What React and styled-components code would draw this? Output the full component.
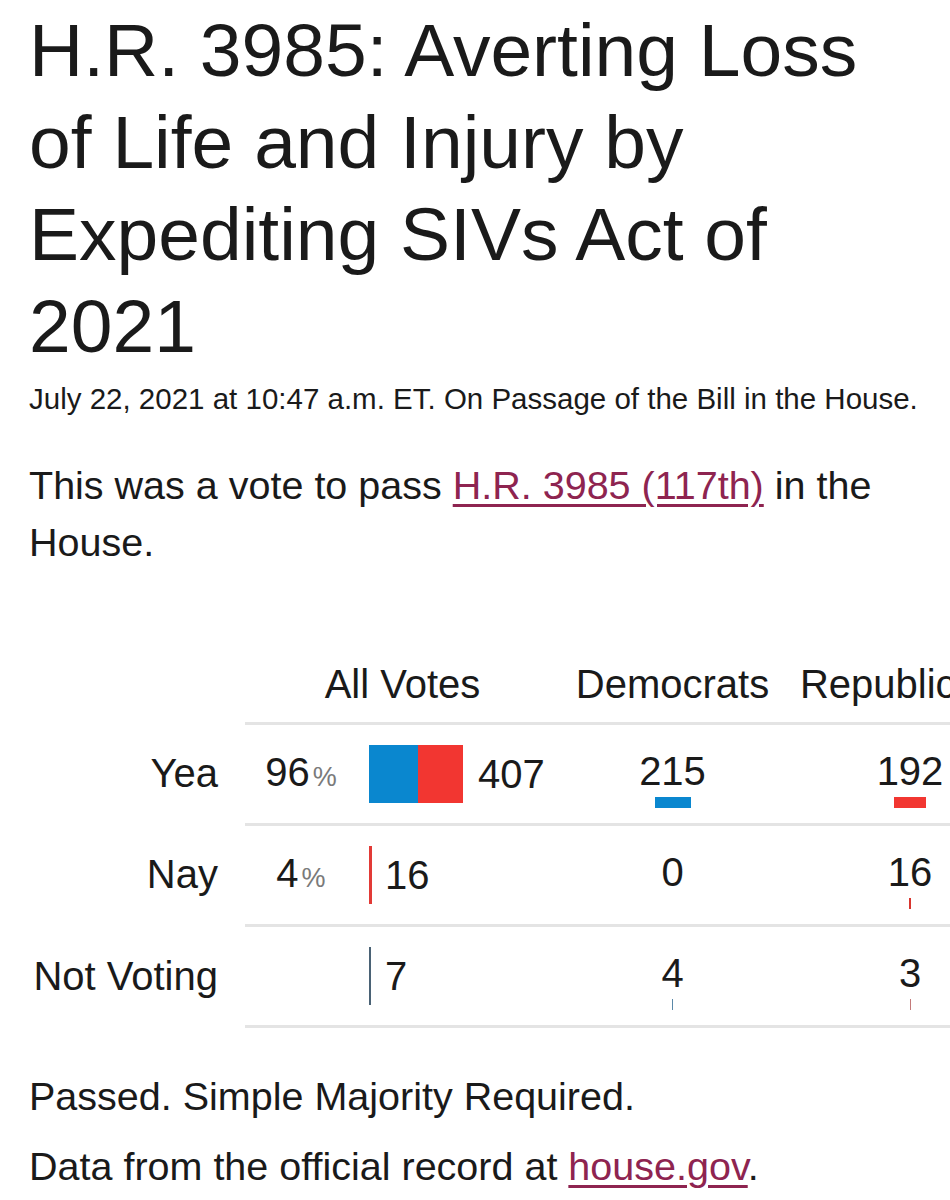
import React from "react";
import styled, { createGlobalStyle } from "styled-components";

const Global = createGlobalStyle`
  html, body { margin: 0; padding: 0; background: #fff; }
  body { overflow-x: hidden; font-family: "Liberation Sans", Arial, sans-serif; color: #1a1a1a; }
`;

const Page = styled.main`
  padding: 4px 0 40px 29px;
  width: 1100px;
`;

const Title = styled.h1`
  margin: 0;
  width: 880px;
  font-size: 75px;
  line-height: 92px;
  font-weight: 400;
`;

const Meta = styled.div`
  margin-top: 5px;
  font-size: 29.5px;
  line-height: 44px;
`;

const Para = styled.p`
  margin: ${(p) => p.$mt || 0}px 0 0;
  width: 880px;
  font-size: 39.5px;
  line-height: 57px;
`;

const Link = styled.a`
  color: #8e2450;
  text-decoration: underline;
  text-decoration-thickness: 3px;
  text-underline-offset: 5px;
`;

const Table = styled.section`
  margin-top: 89px;
  display: flex;
  flex-direction: column;
`;

const Row = styled.div`
  display: flex;
`;

const Label = styled.div`
  width: 189px;
  flex: none;
  display: flex;
  align-items: center;
  justify-content: flex-end;
  font-size: 40px;
  line-height: 48px;
  white-space: nowrap;
`;

const Cells = styled.div`
  margin-left: 27px;
  display: grid;
  grid-template-columns: 315px 225px 250px;
  height: ${(p) => (p.$head ? "auto" : "98px")};
  border-top: ${(p) => (p.$head ? "none" : "3px solid #e4e4e4")};
  border-bottom: ${(p) => (p.$last ? "3px solid #e4e4e4" : "none")};
  padding-bottom: ${(p) => (p.$head ? "14px" : "0")};
`;

const HeadCell = styled.div`
  text-align: center;
  font-size: 40px;
  line-height: 48px;
  white-space: nowrap;
`;

const AllCell = styled.div`
  display: flex;
  align-items: center;
`;

const Pct = styled.div`
  width: 112px;
  display: flex;
  justify-content: center;
  align-items: baseline;
  gap: 3px;
  font-size: 40px;
  line-height: 48px;
`;

const PctSign = styled.span`
  font-size: 27px;
  color: #7a7a7a;
`;

const Bar = styled.div`
  margin-left: 12px;
  height: 58px;
  display: flex;
  flex: none;
`;

const Seg = styled.div`
  height: 100%;
  background: ${(p) => p.$color};
`;

const Count = styled.div`
  margin-left: ${(p) => p.$gap}px;
  font-size: 40px;
  line-height: 48px;
`;

const PartyCell = styled.div`
  padding-top: 24px;
  display: flex;
  flex-direction: column;
  align-items: center;
`;

const PartyNum = styled.div`
  font-size: 40px;
  line-height: 44px;
`;

const PartyBar = styled.div`
  margin-top: 4px;
  height: 11px;
  background: ${(p) => p.$color};
`;

const BLUE = "#0a87cf";
const RED = "#f23631";

const rows = [
  { label: "Yea", pct: "96", bar: [[49, BLUE], [45, RED]], gap: 15, count: 407, dem: 215, demW: 36, rep: 192, repW: 32, dc: BLUE, rc: RED },
  { label: "Nay", pct: "4", bar: [[3, "#e23a36"]], gap: 13, count: 16, dem: 0, demW: 0, rep: 16, repW: 2, dc: BLUE, rc: "#d8362f" },
  { label: "Not Voting", pct: null, bar: [[2, "#4a6275"]], gap: 14, count: 7, dem: 4, demW: 1, rep: 3, repW: 1, dc: "#5a88a8", rc: "#c47a7a" },
];

export default function App() {
  return (
    <>
      <Global />
      <Page>
        <Title>H.R. 3985: Averting Loss of Life and Injury by Expediting SIVs Act of 2021</Title>
        <Meta>July 22, 2021 at 10:47 a.m. ET. On Passage of the Bill in the House.</Meta>
        <Para $mt={36}>
          This was a vote to pass <Link href="#">H.R. 3985 (117th)</Link> in the House.
        </Para>
        <Table>
          <Row>
            <Label />
            <Cells $head>
              <HeadCell>All Votes</HeadCell>
              <HeadCell>Democrats</HeadCell>
              <HeadCell>Republicans</HeadCell>
            </Cells>
          </Row>
          {rows.map((r, i) => (
            <Row key={r.label}>
              <Label>{r.label}</Label>
              <Cells $last={i === rows.length - 1}>
                <AllCell>
                  <Pct>
                    {r.pct && (
                      <>
                        {r.pct}
                        <PctSign>%</PctSign>
                      </>
                    )}
                  </Pct>
                  <Bar>
                    {r.bar.map(([w, c], k) => (
                      <Seg key={k} $color={c} style={{ width: w }} />
                    ))}
                  </Bar>
                  <Count $gap={r.gap}>{r.count}</Count>
                </AllCell>
                <PartyCell>
                  <PartyNum>{r.dem}</PartyNum>
                  <PartyBar $color={r.dc} style={{ width: r.demW }} />
                </PartyCell>
                <PartyCell>
                  <PartyNum>{r.rep}</PartyNum>
                  <PartyBar $color={r.rc} style={{ width: r.repW }} />
                </PartyCell>
              </Cells>
            </Row>
          ))}
        </Table>
        <Para $mt={40}>Passed. Simple Majority Required.</Para>
        <Para $mt={13}>
          Data from the official record at <Link href="#">house.gov</Link>.
        </Para>
      </Page>
    </>
  );
}
